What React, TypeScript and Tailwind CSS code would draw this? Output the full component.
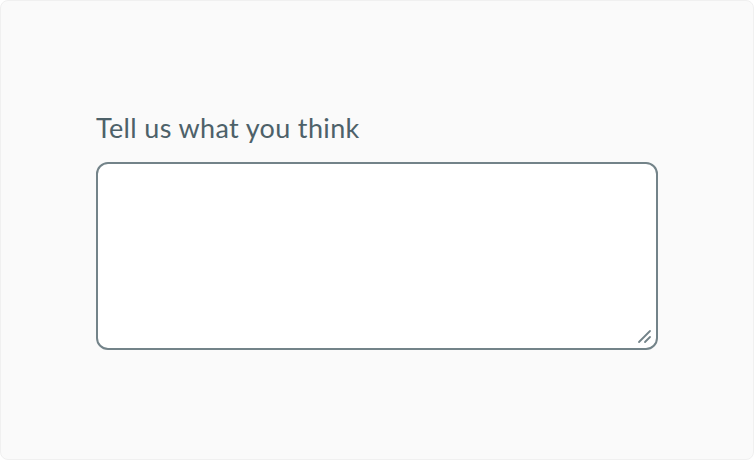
export default function App() {
  return (
    <div className="h-[460px] w-[754px] rounded-lg border border-[#f0f0f0] bg-[#fafafa] font-['Lato',sans-serif]">
      <div className="flex flex-col px-[95px] pt-[110px]">
        <label htmlFor="feedback" className="text-[27px] leading-[34px] tracking-[0.35px] text-[#4d6169]">
          Tell us what you think
        </label>
        <div className="relative mt-[17px] h-[188px] w-[562px]">
          <textarea
            id="feedback"
            className="h-full w-full resize-none rounded-xl border-2 border-[#738389] bg-white p-3 text-base text-[#333] outline-none"
          />
          <svg
            className="pointer-events-none absolute bottom-[6px] right-[6px]"
            width="16"
            height="16"
            viewBox="0 0 16 16"
          >
            <path d="M3 14 L14 3 M9 14 L14 9" stroke="#738389" strokeWidth="1.8" strokeLinecap="round" />
          </svg>
        </div>
      </div>
    </div>
  );
}
